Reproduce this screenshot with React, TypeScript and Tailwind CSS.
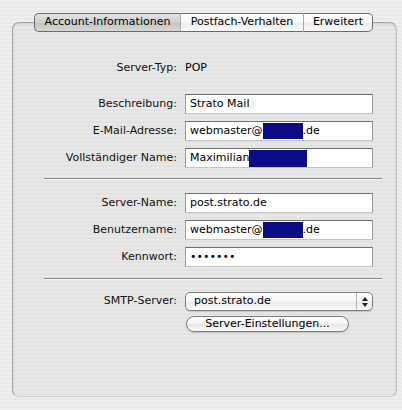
import type { ReactNode } from 'react';

const stripes =
  'bg-[repeating-linear-gradient(180deg,#efefef_0px,#efefef_2px,#e9e9e9_2px,#e9e9e9_4px)]';
const panelStripes =
  'bg-[repeating-linear-gradient(180deg,#e8e8e8_0px,#e8e8e8_2px,#e2e2e2_2px,#e2e2e2_4px)]';

function Redact({ w }: { w: number }) {
  return <span className="inline-block h-[16px] bg-[#0b0b86] align-middle -mt-[1px]" style={{ width: w }} />;
}

function Row({ label, children }: { label: string; children: ReactNode }) {
  return (
    <div className="flex items-center h-[20px]">
      <span className="w-[165px] pr-[1px] text-right text-[#111]">{label}</span>
      <div className="ml-[7px] flex-1">{children}</div>
    </div>
  );
}

function Field({ children }: { children: ReactNode }) {
  return (
    <div className="w-[188px] h-[20px] bg-white border border-[#9a9a9a] border-t-[#6f6f6f] border-b-[#c4c4c4] pl-[4px] flex items-center overflow-hidden whitespace-nowrap text-black">
      {children}
    </div>
  );
}

function Tab({ label, w, active, first, last }: { label: string; w: number; active?: boolean; first?: boolean; last?: boolean }) {
  return (
    <div
      className={`h-[19px] flex items-center justify-center border-y border-[#6b6b6b] ${
        first ? 'border-l rounded-l-[5px]' : 'border-l border-l-[#a8a8a8]'
      } ${last ? 'border-r rounded-r-[5px]' : ''} ${
        active
          ? 'bg-[linear-gradient(180deg,#e4e4e4,#cfcfcf_50%,#c4c4c4_51%,#d6d6d6)]'
          : 'bg-[linear-gradient(180deg,#ffffff,#f6f6f6_50%,#ebebeb_51%,#fafafa)]'
      }`}
      style={{ width: w }}
    >
      {label}
    </div>
  );
}

export default function App() {
  return (
    <div className={`w-[402px] h-[410px] overflow-hidden pt-[22px] pl-[12px] ${stripes} text-[11px] font-['DejaVu_Sans',sans-serif]`}>
      <div className={`w-[385px] h-[375px] border border-[#a3a3a3] border-b-[#cfcfcf] border-r-[#bcbcbc] rounded-[7px] ${panelStripes} shadow-[inset_0_1px_2px_rgba(0,0,0,0.12)]`}>
        <div className="flex -mt-[10px] ml-[21px]">
          <Tab label="Account-Informationen" w={146} active first />
          <Tab label="Postfach-Verhalten" w={123} />
          <Tab label="Erweitert" w={70} last />
        </div>

        <div className="mt-[26px] flex flex-col">
          <Row label="Server-Typ:">
            <span className="text-black">POP</span>
          </Row>

          <div className="mt-[16px] flex flex-col gap-[7px]">
            <Row label="Beschreibung:">
              <Field>Strato Mail</Field>
            </Row>
            <Row label="E-Mail-Adresse:">
              <Field>
                webmaster@<Redact w={40} />.de
              </Field>
            </Row>
            <Row label="Vollständiger Name:">
              <Field>
                Maximilian<span className="inline-block w-[58px] h-[18px] mt-[2px] bg-[#0b0b86]" />
              </Field>
            </Row>
          </div>

          <div className="mt-[10px] ml-[31px] w-[338px] border-t border-[#8a8a8a] border-b border-b-[#f4f4f4]" />

          <div className="mt-[13px] flex flex-col gap-[7px]">
            <Row label="Server-Name:">
              <Field>post.strato.de</Field>
            </Row>
            <Row label="Benutzername:">
              <Field>
                webmaster@<Redact w={40} />.de
              </Field>
            </Row>
            <Row label="Kennwort:">
              <Field>
                <span className="tracking-[0px] text-[11px]">•••••••</span>
              </Field>
            </Row>
          </div>

          <div className="mt-[11px] ml-[31px] w-[338px] border-t border-[#8a8a8a] border-b border-b-[#f4f4f4]" />

          <div className="mt-[12px] flex items-center h-[19px]">
            <span className="w-[165px] pr-[1px] text-right text-[#111]">SMTP-Server:</span>
            <div className="ml-[7px] w-[188px] h-[19px] rounded-[5px] border border-[#7d7d7d] bg-[linear-gradient(180deg,#ffffff,#f4f4f4_50%,#e9e9e9_51%,#fbfbfb)] flex items-center shadow-[0_1px_1px_rgba(0,0,0,0.15)]">
              <span className="flex-1 pl-[8px] text-black">post.strato.de</span>
              <div className="w-[16px] h-full border-l border-[#b5b5b5] flex flex-col items-center justify-center gap-[2px]">
                <svg width="6" height="4" viewBox="0 0 6 4"><path d="M3 0 L6 4 L0 4 Z" fill="#222" /></svg>
                <svg width="6" height="4" viewBox="0 0 6 4"><path d="M0 0 L6 0 L3 4 Z" fill="#222" /></svg>
              </div>
            </div>
          </div>

          <div className="mt-[5px] ml-[173px]">
            <div className="w-[163px] h-[16px] rounded-full border border-[#7d7d7d] bg-[linear-gradient(180deg,#ffffff,#f4f4f4_50%,#e6e6e6_51%,#fafafa)] flex items-center justify-center text-black shadow-[0_1px_1px_rgba(0,0,0,0.15)]">
              Server-Einstellungen...
            </div>
          </div>
        </div>
      </div>
    </div>
  );
}
